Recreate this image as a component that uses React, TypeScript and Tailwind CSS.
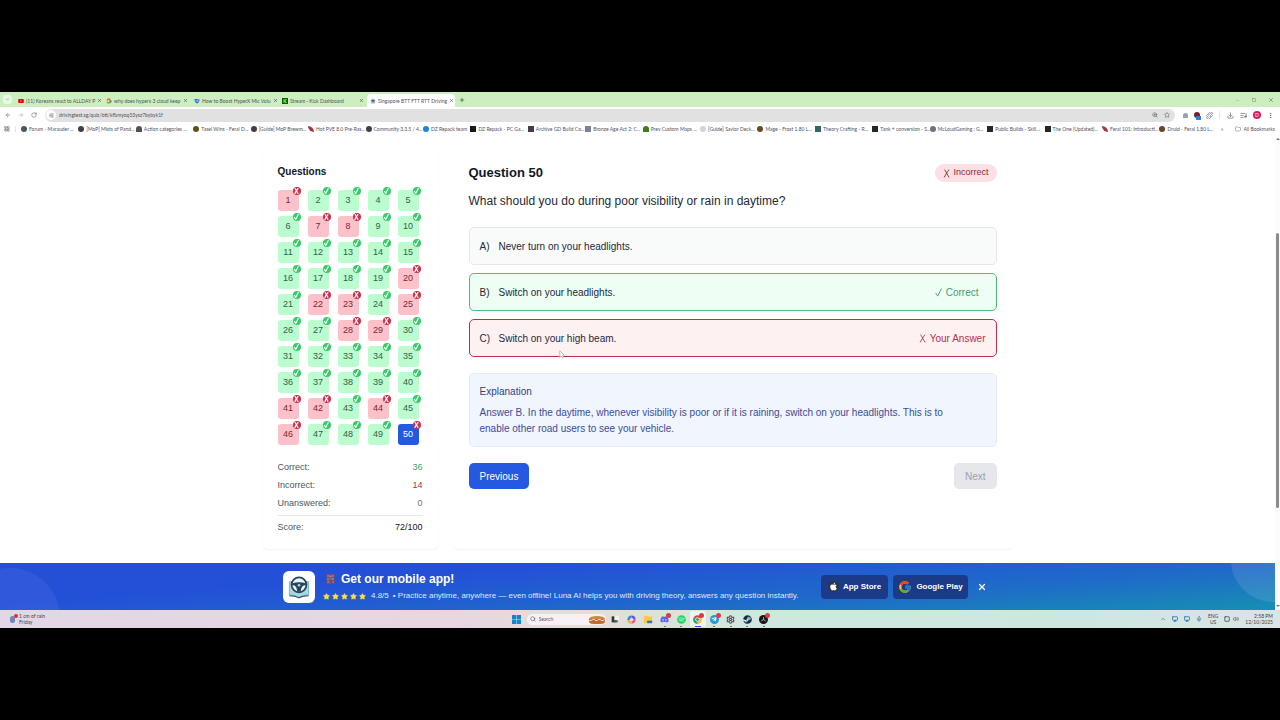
import { useState } from "react";
import clsx from "clsx";
import {
  ArrowLeft,
  ArrowRight,
  ChevronDown,
  ChevronUp,
  Download,
  EllipsisVertical,
  Folder,
  LayoutGrid,
  ListMusic,
  Mic,
  Minus,
  Monitor,
  Plus,
  Puzzle,
  RotateCw,
  Search,
  Settings,
  SlidersHorizontal,
  Square,
  Star,
  Volume2,
  X,
  ZoomIn,
} from "lucide-react";
import { FaApple, FaDiscord, FaSpotify, FaSteam, FaTelegramPlane, FaYoutube } from "react-icons/fa";
import { FcGoogle } from "react-icons/fc";

const TABS = [
  { title: "(11) Koreans react to ALLDAY P", icon: "youtube" },
  { title: "why does hyperx 3 cloud keep", icon: "google" },
  { title: "How to Boost HyperX Mic Volu", icon: "shield" },
  { title: "Stream · Kick Dashboard", icon: "kick" },
  { title: "Singapore BTT FTT RTT Driving", icon: "wheel" },
];

const BOOKMARKS = [
  { label: "Forum - Marauder ...", color: "bg-zinc-600 rounded-full" },
  { label: "[MoP] Mists of Pand...", color: "bg-zinc-700 rounded-full" },
  { label: "Action categories ...", color: "bg-zinc-600 rounded-t-full" },
  { label: "Tasel Wins - Feral D...", color: "bg-[#5c5212] rounded-full" },
  { label: "[Guide] MoP Brewm...", color: "bg-zinc-700 rounded-full" },
  { label: "Hot PVE 8.0 Pre-Ras...", color: "bg-[#a83246] rounded-bl-full rounded-tr-full" },
  { label: "Community 3.3.5 / 4...", color: "bg-zinc-700 rounded-full" },
  { label: "DZ Repack team", color: "bg-[#1b84dc] rounded-full", short: true },
  { label: "DZ Repack - PC Ga...", color: "bg-zinc-900" },
  { label: "Archive GD Build Co...", color: "bg-zinc-700" },
  { label: "Bronze Age Act 2: C...", color: "bg-[#7d7f9c]" },
  { label: "Prev Custom Maps ...", color: "bg-[#3f7d22] rounded-t-full" },
  { label: "[Guide] Savior Deck...", color: "bg-zinc-300 rounded-full" },
  { label: "Mage - Frost 1.80 L...", color: "bg-[#6b4423] rounded-full" },
  { label: "Theory Crafting - R...", color: "bg-[#2d6b62]" },
  { label: "Tank + conversion - S...", color: "bg-zinc-800" },
  { label: "McLoudGaming : G...", color: "bg-zinc-500 rounded-full" },
  { label: "Public Builds - Skill...", color: "bg-zinc-800" },
  { label: "The One (Updated)...", color: "bg-zinc-800" },
  { label: "Feral 101: Introducti...", color: "bg-[#a83246] rounded-bl-full rounded-tr-full" },
  { label: "Druid - Feral 1.80 L...", color: "bg-[#6b4423] rounded-full" },
];

const WRONG = [1, 7, 8, 20, 22, 23, 25, 28, 29, 41, 42, 44, 46, 50];
const QUESTIONS = Array.from({ length: 50 }, (_, i) => i + 1);

const STATS = [
  { label: "Correct:", value: "36", color: "text-[#3f9f6c]" },
  { label: "Incorrect:", value: "14", color: "text-[#b8304a]" },
  { label: "Unanswered:", value: "0", color: "text-gray-500" },
];

const OPTIONS = [
  { key: "A)", text: "Never turn on your headlights.", state: "none" },
  { key: "B)", text: "Switch on your headlights.", state: "correct" },
  { key: "C)", text: "Switch on your high beam.", state: "wrong" },
];

function Tick({ className }: { className?: string }) {
  return (
    <svg viewBox="0 0 8 10" className={className} fill="none" stroke="currentColor" strokeLinecap="round" strokeLinejoin="round">
      <path d="M1 6 L3 9 L7 1" />
    </svg>
  );
}

function Cross({ className }: { className?: string }) {
  return (
    <svg viewBox="0 0 8 10" className={className} fill="none" stroke="currentColor" strokeLinecap="round">
      <path d="M2 1 C3 2 5 7 6.5 9" />
      <path d="M6.5 1 C5 3 3 6 1.5 9" />
    </svg>
  );
}

function TabIcon({ name }: { name: string }) {
  if (name === "youtube") return <FaYoutube className="size-[6px] shrink-0 text-red-600" />;
  if (name === "google") return <FcGoogle className="size-[6px] shrink-0" />;
  if (name === "kick") {
    return (
      <svg viewBox="0 0 12 12" className="size-[6px] shrink-0">
        <rect width="12" height="12" fill="#0c5a12" />
        <path d="M3 2h2v3l2-3h3L7 6l3 4H7L5 7v3H3z" fill="#53fc18" />
      </svg>
    );
  }
  if (name === "shield") {
    return (
      <svg viewBox="0 0 12 12" className="size-[6px] shrink-0">
        <path d="M1 2h10c0 5-2 8-5 9C3 10 1 7 1 2z" fill="#3b6fd8" />
        <path d="M4 5l2 2 3-4" stroke="#fff" fill="none" strokeWidth="1.5" />
      </svg>
    );
  }
  return <WheelLogo className="size-[6px] shrink-0" />;
}

function WheelLogo({ className }: { className?: string }) {
  return (
    <svg viewBox="0 0 32 32" className={className}>
      <path d="M5 10v15c4 0 8 1 11 3 3-2 7-3 11-3V10z" fill="#a9d7e4" stroke="#6fb0c6" />
      <path d="M5 26c4 0 8 .6 11 2.400 3-1.800 7-2.400 11-2.400" fill="none" stroke="#27455f" strokeWidth="1.200" />
      <circle cx="16" cy="13.500" r="8.500" fill="#e8f4f8" stroke="#27455f" strokeWidth="2" />
      <path d="M8 12c5-2 11-2 16 0v2c-4 0-5.500 2-6 7.500h-4C13.500 16 12 14 8 14z" fill="#27455f" />
      <circle cx="16" cy="14" r="1.500" fill="#a9d7e4" />
    </svg>
  );
}

function BrowserChrome() {
  return (
    <header className="font-[Lato,'Open_Sans',sans-serif] text-[5px] leading-[8px] text-zinc-600">
      <div className="flex h-[15px] items-end bg-[#cceec0] pl-[3px]">
        <button aria-label="Search tabs" className="mb-[3px] mr-[3px] grid size-[9px] place-items-center rounded-[3px] bg-[#e8f8e2]">
          <ChevronDown className="size-[5px]" />
        </button>
        {TABS.map((tab, i) => (
          <div
            key={tab.title}
            className={clsx(
              "flex h-[13px] w-[88px] items-center gap-[2px] px-[3px]",
              i === TABS.length - 1 && "rounded-t-[4px] bg-white",
            )}
          >
            <TabIcon name={tab.icon} />
            <span className="whitespace-nowrap">{tab.title}</span>
            <button aria-label="Close tab" className="ml-auto">
              <X className="size-[5px] text-zinc-900" />
            </button>
          </div>
        ))}
        <button aria-label="New tab" className="mb-[4px] ml-[4px]">
          <Plus className="size-[6px] text-zinc-900" />
        </button>
        <div className="mb-[4px] ml-auto flex items-center gap-[12px] pr-[6px] text-zinc-600">
          <Minus className="size-[5px] text-zinc-400" />
          <Square className="size-[4px]" />
          <X className="size-[6px]" />
        </div>
      </div>

      <div className="flex h-[16px] items-center bg-white pl-[5px] pr-[5px]">
        <div className="flex w-[40px] items-center gap-[7px]">
          <ArrowLeft className="size-[6px]" />
          <ArrowRight className="size-[6px] text-zinc-400" />
          <RotateCw className="size-[6px]" />
        </div>
        <div className="flex h-[13px] flex-1 items-center gap-[3px] rounded-full bg-[#e1e1e1] px-[1px]">
          <span className="grid size-[10px] place-items-center rounded-full bg-white">
            <SlidersHorizontal className="size-[5px]" />
          </span>
          <input
            aria-label="Address"
            className="min-w-0 flex-1 bg-transparent text-zinc-600"
            defaultValue="drivingtest.sg/quiz/btt/kfbmyoq53ysz7bybyk1f"
          />
          <ZoomIn className="size-[6px] text-zinc-600" />
          <Star className="ml-[3px] mr-[4px] size-[6px] text-zinc-600" />
        </div>
        <div className="flex w-[100px] items-center justify-between pl-[8px] pr-[1px]">
          <span className="size-[5px] rounded-t-full bg-zinc-400" />
          <span className="relative size-[6px] rounded-full bg-[#7c1f2c]">
            <span className="absolute -bottom-[2px] left-[2px] h-[4px] w-[5px] bg-[#2f7fe0]" />
          </span>
          <Puzzle className="size-[7px]" />
          <span className="h-[8px] w-px bg-zinc-200" />
          <Download className="size-[7px]" />
          <ListMusic className="size-[7px]" />
          <span className="grid size-[8px] place-items-center rounded-full bg-[#d81b60] text-[5px] text-white">D</span>
          <EllipsisVertical className="size-[7px]" />
        </div>
      </div>

      <nav className="flex h-[12px] items-center bg-white pl-[4px] pr-[5px]">
        <LayoutGrid className="mr-[5px] size-[6px]" />
        <span className="mr-[5px] h-[6px] w-px bg-zinc-200" />
        <div className="flex min-w-0 flex-1">
          {BOOKMARKS.map((b) => (
            <a
              key={b.label}
              href="#"
              className={clsx("flex min-w-0 grow items-center gap-[2px]", b.short ? "w-[47px]" : "w-[57px]")}
            >
              <span className={clsx("size-[6px] shrink-0", b.color)} />
              <span className="whitespace-nowrap">{b.label}</span>
            </a>
          ))}
        </div>
        <span className="w-[10px] text-center">»</span>
        <a href="#" className="flex w-[48px] items-center justify-end gap-[2px] whitespace-nowrap">
          <Folder className="size-[6px] text-zinc-500" />
          All Bookmarks
        </a>
      </nav>
    </header>
  );
}

function QuestionList({ current, onSelect }: { current: number; onSelect: (n: number) => void }) {
  return (
    <aside className="w-[175px] shrink-0 rounded-[5px] bg-white px-[15px] pt-[14px] shadow-xs">
      <h2 className="text-[10px] font-bold leading-[16px] text-gray-900">Questions</h2>
      <div className="mt-[10px] grid grid-cols-5 gap-[5px]">
        {QUESTIONS.map((n) => {
          const wrong = WRONG.includes(n);
          return (
            <button
              key={n}
              onClick={() => onSelect(n)}
              className={clsx(
                "relative size-[21px] rounded-[3px] pt-px text-[9px]",
                n === current
                  ? "bg-[#2559e0] text-white"
                  : wrong
                    ? "bg-[#fdc2c9] text-[#7c2638]"
                    : "bg-[#bbfdcf] text-[#2f6147]",
              )}
            >
              {n}
              <span
                className={clsx(
                  "absolute -right-[2px] -top-[3px] grid size-[8px] place-items-center rounded-full text-white",
                  wrong ? "bg-[#c9304a]" : "bg-[#35cb66]",
                )}
              >
                {wrong ? <Cross className="h-[6px] stroke-2" /> : <Tick className="h-[6px] stroke-2" />}
              </span>
            </button>
          );
        })}
      </div>
      <dl className="mt-[13px] text-[9px] leading-[18px] text-gray-600">
        {STATS.map((s) => (
          <div key={s.label} className="flex justify-between">
            <dt>{s.label}</dt>
            <dd className={s.color}>{s.value}</dd>
          </div>
        ))}
        <div className="mt-[3px] flex justify-between border-t border-gray-200 pt-[2px]">
          <dt>Score:</dt>
          <dd className="text-gray-900">72/100</dd>
        </div>
      </dl>
    </aside>
  );
}

function QuestionCard({ current, onPrevious }: { current: number; onPrevious: () => void }) {
  return (
    <section className="min-w-0 flex-1 rounded-[5px] bg-white pb-[60px] pl-[15px] pr-[16px] pt-[14px] shadow-xs">
      <div className="flex items-center justify-between">
        <h1 className="text-[13px] font-bold leading-[18px] text-gray-900">Question {current}</h1>
        <span className="flex h-[18px] items-center gap-[3px] rounded-full bg-[#fde0e3] px-[8px] text-[9px] text-[#8c2a3a]">
          <Cross className="h-[9px]" />
          Incorrect
        </span>
      </div>
      <p className="mt-[10px] text-[12px] leading-[18px] text-gray-800">
        What should you do during poor visibility or rain in daytime?
      </p>

      <div className="mt-[17px] flex flex-col gap-[8px]">
        {OPTIONS.map((o) => (
          <div
            key={o.key}
            className={clsx(
              "flex h-[38px] items-center rounded-[5px] border px-[10px] text-[10px] text-gray-800",
              o.state === "none" && "border-gray-200 bg-[#f9fbfb]",
              o.state === "correct" && "border-[#4cc074] bg-[#effef4]",
              o.state === "wrong" && "border-[#b8304a] bg-[#fef1f2]",
            )}
          >
            <span className="w-[19px]">{o.key}</span>
            <span>{o.text}</span>
            {o.state === "correct" && (
              <span className="ml-auto flex items-center gap-[4px] pr-[7px] text-[#3f9f6c]">
                <Tick className="h-[9px]" />
                Correct
              </span>
            )}
            {o.state === "wrong" && (
              <span className="ml-auto flex items-center gap-[4px] text-[#b8304a]">
                <Cross className="h-[9px]" />
                Your Answer
              </span>
            )}
          </div>
        ))}
      </div>

      <div className="mt-[16px] rounded-[5px] border border-[#e4ecfb] bg-[#f0f5fe] px-[10px] pb-[9px] pt-[10px] text-[10px] leading-[16px]">
        <h3 className="text-[#2f3f86]">Explanation</h3>
        <p className="mt-[5px] text-[#3a4c9c]">
          Answer B. In the daytime, whenever visibility is poor or if it is raining, switch on your headlights. This is to
          <br />
          enable other road users to see your vehicle.
        </p>
      </div>

      <div className="mt-[16px] flex justify-between text-[10px]">
        <button onClick={onPrevious} className="h-[26px] rounded-[5px] bg-[#2559e0] px-[11px] text-white">
          Previous
        </button>
        <button disabled className="h-[26px] rounded-[5px] bg-gray-200 px-[11px] text-gray-400">
          Next
        </button>
      </div>
    </section>
  );
}

function AppBanner() {
  return (
    <div className="relative flex h-[47px] items-center justify-center overflow-hidden bg-[linear-gradient(176deg,#2450d8_30%,#1e6cc8_70%,#1690b2_100%)] text-white">
      <span className="absolute -left-[40px] top-[5px] size-[100px] rounded-full bg-white/5" />
      <span className="absolute -right-[40px] -top-[45px] size-[84px] rounded-full bg-white/10" />
      <div className="relative flex w-[709px] items-center">
        <span className="grid size-[32px] place-items-center rounded-[6px] bg-white">
          <WheelLogo className="size-[28px]" />
        </span>
        <div className="ml-[8px]">
          <h2 className="flex items-center gap-[6px] text-[12px] font-bold leading-[16px]">
            <svg viewBox="0 0 10 12" className="ml-[3px] h-[10px] w-[9px]">
              <rect x="0" y="0" width="10" height="12" rx="1" fill="#5a5578" />
              <path d="M1 1h3v3H1zM6 1h3v3H6zM4 5h3v2H4zM1 8h3v3H1zM7 8h2v3H7z" fill="#d9534f" />
              <path d="M4 2h2v2H4zM1 5h2v2H1zM7 5h2v2H7z" fill="#62a0d8" />
            </svg>
            Get our mobile app!
          </h2>
          <p className="mt-[3px] flex items-center text-[8px] leading-[12px] text-blue-100">
            <span className="flex gap-[2px] text-[#fde047]">
              {[1, 2, 3, 4, 5].map((n) => (
                <Star key={n} className="size-[7px] fill-current" />
              ))}
            </span>
            <span className="ml-[5px]">4.8/5</span>
            <span className="ml-[4px] whitespace-nowrap">
              • Practice anytime, anywhere — even offline! Luna AI helps you with driving theory, answers any question instantly.
            </span>
          </p>
        </div>
        <div className="ml-auto flex items-center gap-[5px] text-[8px] font-bold">
          <a href="#" className="flex h-[24px] w-[67px] items-center justify-center gap-[4px] whitespace-nowrap rounded-[4px] bg-[#1b3a88]">
            <span className="grid size-[11px] place-items-center rounded-full bg-[#2f3542]">
              <FaApple className="size-[9px]" />
            </span>
            App Store
          </a>
          <a href="#" className="flex h-[24px] w-[75px] items-center justify-center gap-[4px] whitespace-nowrap rounded-[4px] bg-[#1b3a88]">
            <FcGoogle className="size-[14px]" />
            Google Play
          </a>
          <button aria-label="Dismiss" className="ml-[2px] mr-[3px] grid size-[14px] place-items-center">
            <X className="size-[10px]" strokeWidth={3} />
          </button>
        </div>
      </div>
    </div>
  );
}

const APPS = [
  {
    name: "Task view",
    icon: (
      <svg viewBox="0 0 12 12" className="size-[8px]">
        <path d="M1 2h7v9H1z" fill="#333" />
        <path d="M5 1h7v7H5z" fill="#f2f2f2" />
        <path d="M4 8h6v3H4z" fill="#555" />
      </svg>
    ),
  },
  {
    name: "Copilot",
    icon: (
      <svg viewBox="0 0 12 12" className="size-[9px]" fill="none" strokeWidth="3">
        <path d="M2 7c0-3 1-5 4-5" stroke="#2c8de0" />
        <path d="M6 2c3 0 4 1 4 4" stroke="#7a4fd0" />
        <path d="M10 6c0 3-2 4-4 4" stroke="#e5588a" />
        <path d="M6 10c-2 0-4-1-4-3" stroke="#f0b13c" />
      </svg>
    ),
  },
  {
    name: "Explorer",
    icon: (
      <svg viewBox="0 0 12 12" className="size-[10px]">
        <path d="M1 2h4l1 1h5v8H1z" fill="#f7c843" />
        <path d="M5 8h6v3H5z" fill="#2677c9" />
      </svg>
    ),
  },
  { name: "Discord", icon: <FaDiscord className="size-[9px] text-[#5865f2]" />, open: true, badge: true },
  { name: "Spotify", icon: <FaSpotify className="size-[9px] text-[#1ed760]" />, open: true },
  {
    name: "Chrome",
    icon: (
      <svg viewBox="0 0 12 12" className="size-[9px]">
        <path d="M6 6L1 3a6 6 0 0 1 10 0z" fill="#e33b2e" />
        <path d="M6 6l5-3a6 6 0 0 1-5 9z" fill="#f9bf2d" />
        <path d="M6 6v6A6 6 0 0 1 1 3z" fill="#2da44e" />
        <circle cx="6" cy="6" r="2.500" fill="#3b7de8" stroke="#fff" />
      </svg>
    ),
    open: true,
    active: true,
    badge: true,
  },
  {
    name: "Telegram",
    icon: (
      <span className="grid size-[9px] place-items-center rounded-full bg-[#2599d6]">
        <FaTelegramPlane className="size-[6px] text-white" />
      </span>
    ),
    open: true,
    badge: true,
  },
  { name: "Settings", icon: <Settings className="size-[9px] text-zinc-600" strokeWidth={3} />, open: true },
  { name: "Steam", icon: <FaSteam className="size-[9px] text-[#14304f]" />, open: true },
  {
    name: "OBS",
    icon: (
      <svg viewBox="0 0 12 12" className="size-[9px]">
        <circle cx="6" cy="6" r="6" fill="#15151a" />
        <path d="M6 6V3M6 6l3 2M6 6L3 8" stroke="#ddd" fill="none" />
      </svg>
    ),
    open: true,
    badge: true,
  },
];

function Taskbar() {
  return (
    <footer className="grid h-[18px] grid-cols-[1fr_auto_1fr] items-center bg-[linear-gradient(90deg,#e3d6e6_0%,#e8d6e2_35%,#e6dcd8_46%,#cfe8de_60%,#cde7e0_85%,#dbe4e4_100%)] pl-[10px] pr-[7px] font-[Lato,'Open_Sans',sans-serif] text-[5px] leading-[6px] text-zinc-700">
      <div className="flex items-center gap-[4px]">
        <span className="relative h-[7px] w-[5px] rounded-full bg-[#6f86b8]">
          <span className="absolute -right-[3px] -top-[2px] size-[4px] rounded-full bg-[#d92c3a]" />
        </span>
        <div>
          1 cm of rain
          <br />
          Friday
        </div>
      </div>

      <div className="flex items-center">
        <svg viewBox="0 0 10 10" className="size-[9px]">
          <path d="M0 0h4.700v4.700H0zM5.300 0H10v4.700H5.300zM0 5.300h4.700V10H0zM5.300 5.300H10V10H5.300z" fill="#1583cf" />
        </svg>
        <label className="ml-[6px] mr-[1px] flex h-[11px] w-[79px] items-center gap-[3px] rounded-full bg-[#f7f1f6] pl-[3px]">
          <Search className="size-[6px] shrink-0" />
          <input aria-label="Search" placeholder="Search" className="w-0 min-w-0 flex-1 bg-transparent placeholder:text-zinc-600" />
          <svg viewBox="0 0 18 9" className="h-[9px] w-[18px] shrink-0">
            <path d="M1 4c0-4 16-4 16 0z" fill="#d08a3e" />
            <path d="M0 4h18v2H0z" fill="#f6e3c0" />
            <path d="M1 5c2-2 4 2 6 0s4 2 6 0 3 1 4 0" stroke="#b4371e" strokeWidth="1" fill="none" />
            <path d="M1 6h16c0 3-3 3-8 3S1 9 1 6z" fill="#c06a2c" />
          </svg>
        </label>
        <div className="flex">
          {APPS.map((app, i) => (
            <button
              key={app.name}
              aria-label={app.name}
              className={clsx(
                "relative grid h-[16px] place-items-center rounded-[2px]",
                i % 2 ? "w-[16px]" : "w-[17px]",
                app.active && "bg-white/60",
              )}
            >
              {app.icon}
              {app.badge && <span className="absolute right-[2px] top-[2px] size-[5px] rounded-full bg-[#dc3a4c]" />}
              {app.open && (
                <span className={clsx("absolute bottom-0 h-px", app.active ? "w-[6px] bg-blue-600" : "w-[2px] bg-zinc-500")} />
              )}
            </button>
          ))}
        </div>
      </div>

      <div className="flex items-center justify-end gap-[6px]">
        <ChevronUp className="size-[6px]" />
        <Monitor className="size-[6px] text-[#1a6fb5]" strokeWidth={3} />
        <Monitor className="size-[6px] text-[#1a6fb5]" strokeWidth={3} />
        <Mic className="size-[6px] text-[#33658c]" />
        <div className="text-center">
          ENG
          <br />
          US
        </div>
        <div className="flex gap-[3px]">
          <Square className="size-[6px]" strokeWidth={3} />
          <Volume2 className="size-[6px]" />
        </div>
        <div className="text-right">
          2:58 PM
          <br />
          12/10/2025
        </div>
      </div>
    </footer>
  );
}

export default function App() {
  const [current, setCurrent] = useState(50);

  return (
    <div className="flex min-h-screen flex-col justify-center bg-black font-['Liberation_Sans',Arial,sans-serif]">
      <BrowserChrome />
      <div className="flex bg-white">
        <div className="min-w-0 flex-1">
          <main className="relative mx-auto flex w-[750px] gap-[16px] pb-[14px] pt-[15px]">
            <QuestionList current={current} onSelect={setCurrent} />
            <QuestionCard current={current} onPrevious={() => setCurrent(Math.max(1, current - 1))} />
            {/* pointer */}
            <svg viewBox="0 0 8 12" className="absolute left-[296px] top-[215px] h-[9px] w-[6px]">
              <path d="M1 1v9l2-2 2 3 1-1-1-3h2z" fill="#fff" stroke="#b9a5ab" />
            </svg>
          </main>
          <AppBanner />
        </div>
        <div className="flex w-[5px] flex-col items-center bg-[#fbfbfb] py-[3px]">
          <span className="border-x-2 border-b-2 border-x-transparent border-b-zinc-500" />
          <span className="mt-[93px] h-[275px] w-[3px] rounded-full bg-[#8c8c8c]" />
          <span className="mt-auto border-x-2 border-t-2 border-x-transparent border-t-zinc-500" />
        </div>
      </div>
      <Taskbar />
    </div>
  );
}
